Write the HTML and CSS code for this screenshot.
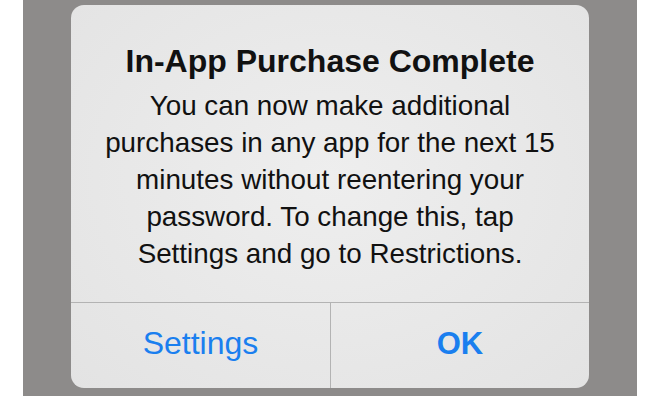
FILE: index.html
```html
<!DOCTYPE html>
<html>
<head>
<meta charset="utf-8">
<link rel="stylesheet" href="styles.css">
</head>
<body>
<div class="stage">
  <div class="alert">
    <div class="alert-content">
      <h1 class="alert-title">In-App Purchase Complete</h1>
      <p class="alert-message">You can now make additional<br>purchases in any app for the next 15<br>minutes without reentering your<br>password. To change this, tap<br>Settings and go to Restrictions.</p>
    </div>
    <div class="alert-actions">
      <button class="alert-btn">Settings</button>
      <button class="alert-btn alert-btn-primary">OK</button>
    </div>
  </div>
</div>
</body>
</html>
```
FILE: styles.css
```css
html, body {
  margin: 0;
  padding: 0;
  background: #ffffff;
}
.stage {
  margin: 0 23px;
  height: 396px;
  background: #8d8b8a;
  display: flex;
  justify-content: center;
  padding-top: 5px;
  box-sizing: border-box;
}
.alert {
  width: 518px;
  height: 383px;
  border-radius: 13px;
  background: radial-gradient(ellipse at 50% 45%, #eeeeee 0%, #e8e8e8 55%, #e3e3e3 100%);
  display: flex;
  flex-direction: column;
  overflow: hidden;
  font-family: "Liberation Sans", Arial, sans-serif;
  color: #111111;
}
.alert-content {
  height: 298px;
  box-sizing: border-box;
  padding-top: 38px;
  text-align: center;
  border-bottom: 1px solid #b3b3b3;
}
.alert-title {
  margin: 0;
  font-size: 32px;
  line-height: 36px;
  font-weight: bold;
}
.alert-message {
  margin: 8px 0 0;
  font-size: 27.8px;
  line-height: 37px;
  font-weight: normal;
}
.alert-actions {
  flex: 1;
  display: grid;
  grid-template-columns: 1fr 1fr;
}
.alert-btn {
  border: 0;
  background: transparent;
  font-family: "Liberation Sans", Arial, sans-serif;
  font-size: 32px;
  color: #1a7fef;
  padding: 0 0 4px;
  margin: 0;
}
.alert-btn + .alert-btn {
  border-left: 1px solid #b3b3b3;
}
.alert-btn-primary {
  font-weight: bold;
  font-size: 31px;
}
```
